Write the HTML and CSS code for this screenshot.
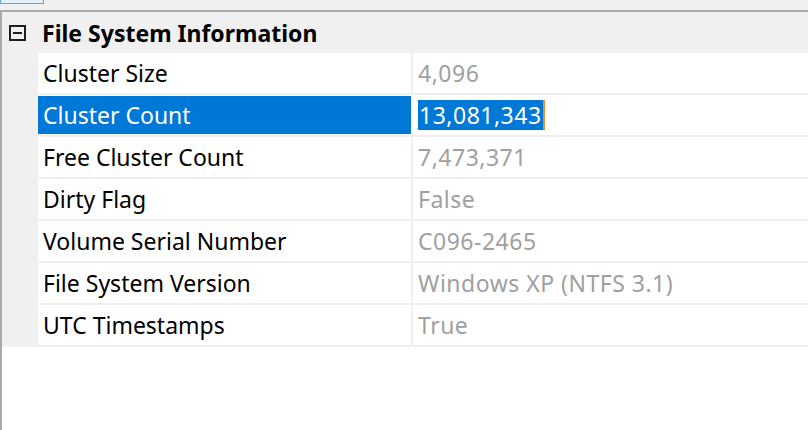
FILE: index.html
```html
<!DOCTYPE html>
<html lang="ko">
<head>
    <meta charset="UTF-8">
    <title>File System Information</title>
    <link rel="stylesheet" href="styles.css">
</head>
<body>
    <!-- 상단 툴바 -->
    <div class="toolbar">
        <div class="tool-btn"></div>
    </div>

    <!-- 속성 그리드 -->
    <div class="prop-grid">
        <div class="category">
            <div class="cat-icon"><span class="minus"></span></div>
            <div class="cat-title">File System Information</div>
        </div>

        <div class="row">
            <div class="margin"></div>
            <div class="name">Cluster Size</div>
            <div class="value">4,096</div>
        </div>
        <div class="row selected">
            <div class="margin"></div>
            <div class="name">Cluster Count</div>
            <div class="value"><span class="sel-text">13,081,343</span><span class="caret"></span></div>
        </div>
        <div class="row">
            <div class="margin"></div>
            <div class="name">Free Cluster Count</div>
            <div class="value">7,473,371</div>
        </div>
        <div class="row">
            <div class="margin"></div>
            <div class="name">Dirty Flag</div>
            <div class="value">False</div>
        </div>
        <div class="row">
            <div class="margin"></div>
            <div class="name">Volume Serial Number</div>
            <div class="value">C096-2465</div>
        </div>
        <div class="row">
            <div class="margin"></div>
            <div class="name">File System Version</div>
            <div class="value">Windows XP (NTFS 3.1)</div>
        </div>
        <div class="row">
            <div class="margin"></div>
            <div class="name">UTC Timestamps</div>
            <div class="value">True</div>
        </div>
    </div>
</body>
</html>
```
FILE: styles.css
```css
/* 공통 */
body {
    margin: 0;
    width: 808px;
    height: 430px;
    overflow: hidden;
    background: #ffffff;
    font-family: "Noto Sans", "Noto Sans CJK KR", sans-serif;
    font-size: 23px;
}

* {
    box-sizing: border-box;
}

/* 툴바 */
.toolbar {
    height: 10px;
    background: #f0f0f0;
}

.tool-btn {
    width: 44px;
    height: 4px;
    border: 1px solid #5fa2e0;
    border-top: none;
    background: #e5f1fb;
}

/* 그리드 */
.prop-grid {
    border-top: 2px solid #a9a9a9;
    border-left: 2px solid #a9a9a9;
    height: 420px;
}

.category {
    display: flex;
    align-items: center;
    height: 41px;
    background: #f0f0f0;
}

.cat-icon {
    width: 40px;
    padding-left: 7px;
    display: flex;
}

.minus {
    width: 17px;
    height: 16px;
    border: 2px solid #1e1e1e;
    position: relative;
    margin-top: 1px;
}

.minus::after {
    content: "";
    position: absolute;
    left: 2px;
    right: 2px;
    top: 5px;
    height: 2px;
    background: #1e1e1e;
}

.cat-title {
    font-weight: bold;
    color: #000;
}

.row {
    display: flex;
    height: 42px;
    border-bottom: 2px solid #f0f0f0;
}

.margin {
    width: 36px;
    background: #f0f0f0;
}

.name {
    width: 375px;
    padding-left: 5px;
    border-right: 2px solid #f0f0f0;
    display: flex;
    align-items: center;
    color: #000;
}

.value {
    flex: 1;
    padding-left: 5px;
    display: flex;
    align-items: center;
    color: #a0a0a0;
    letter-spacing: 0.5px;
}

.selected .name {
    background: #0078d7;
    color: #fff;
    margin: 1px 2px 1px 0;
    width: 373px;
    border-right: none;
}

.sel-text {
    background: #0078d7;
    color: #fff;
    line-height: 30px;
    padding: 0 1px;
}

.caret {
    width: 2px;
    height: 30px;
    background: #f08a24;
}
```
